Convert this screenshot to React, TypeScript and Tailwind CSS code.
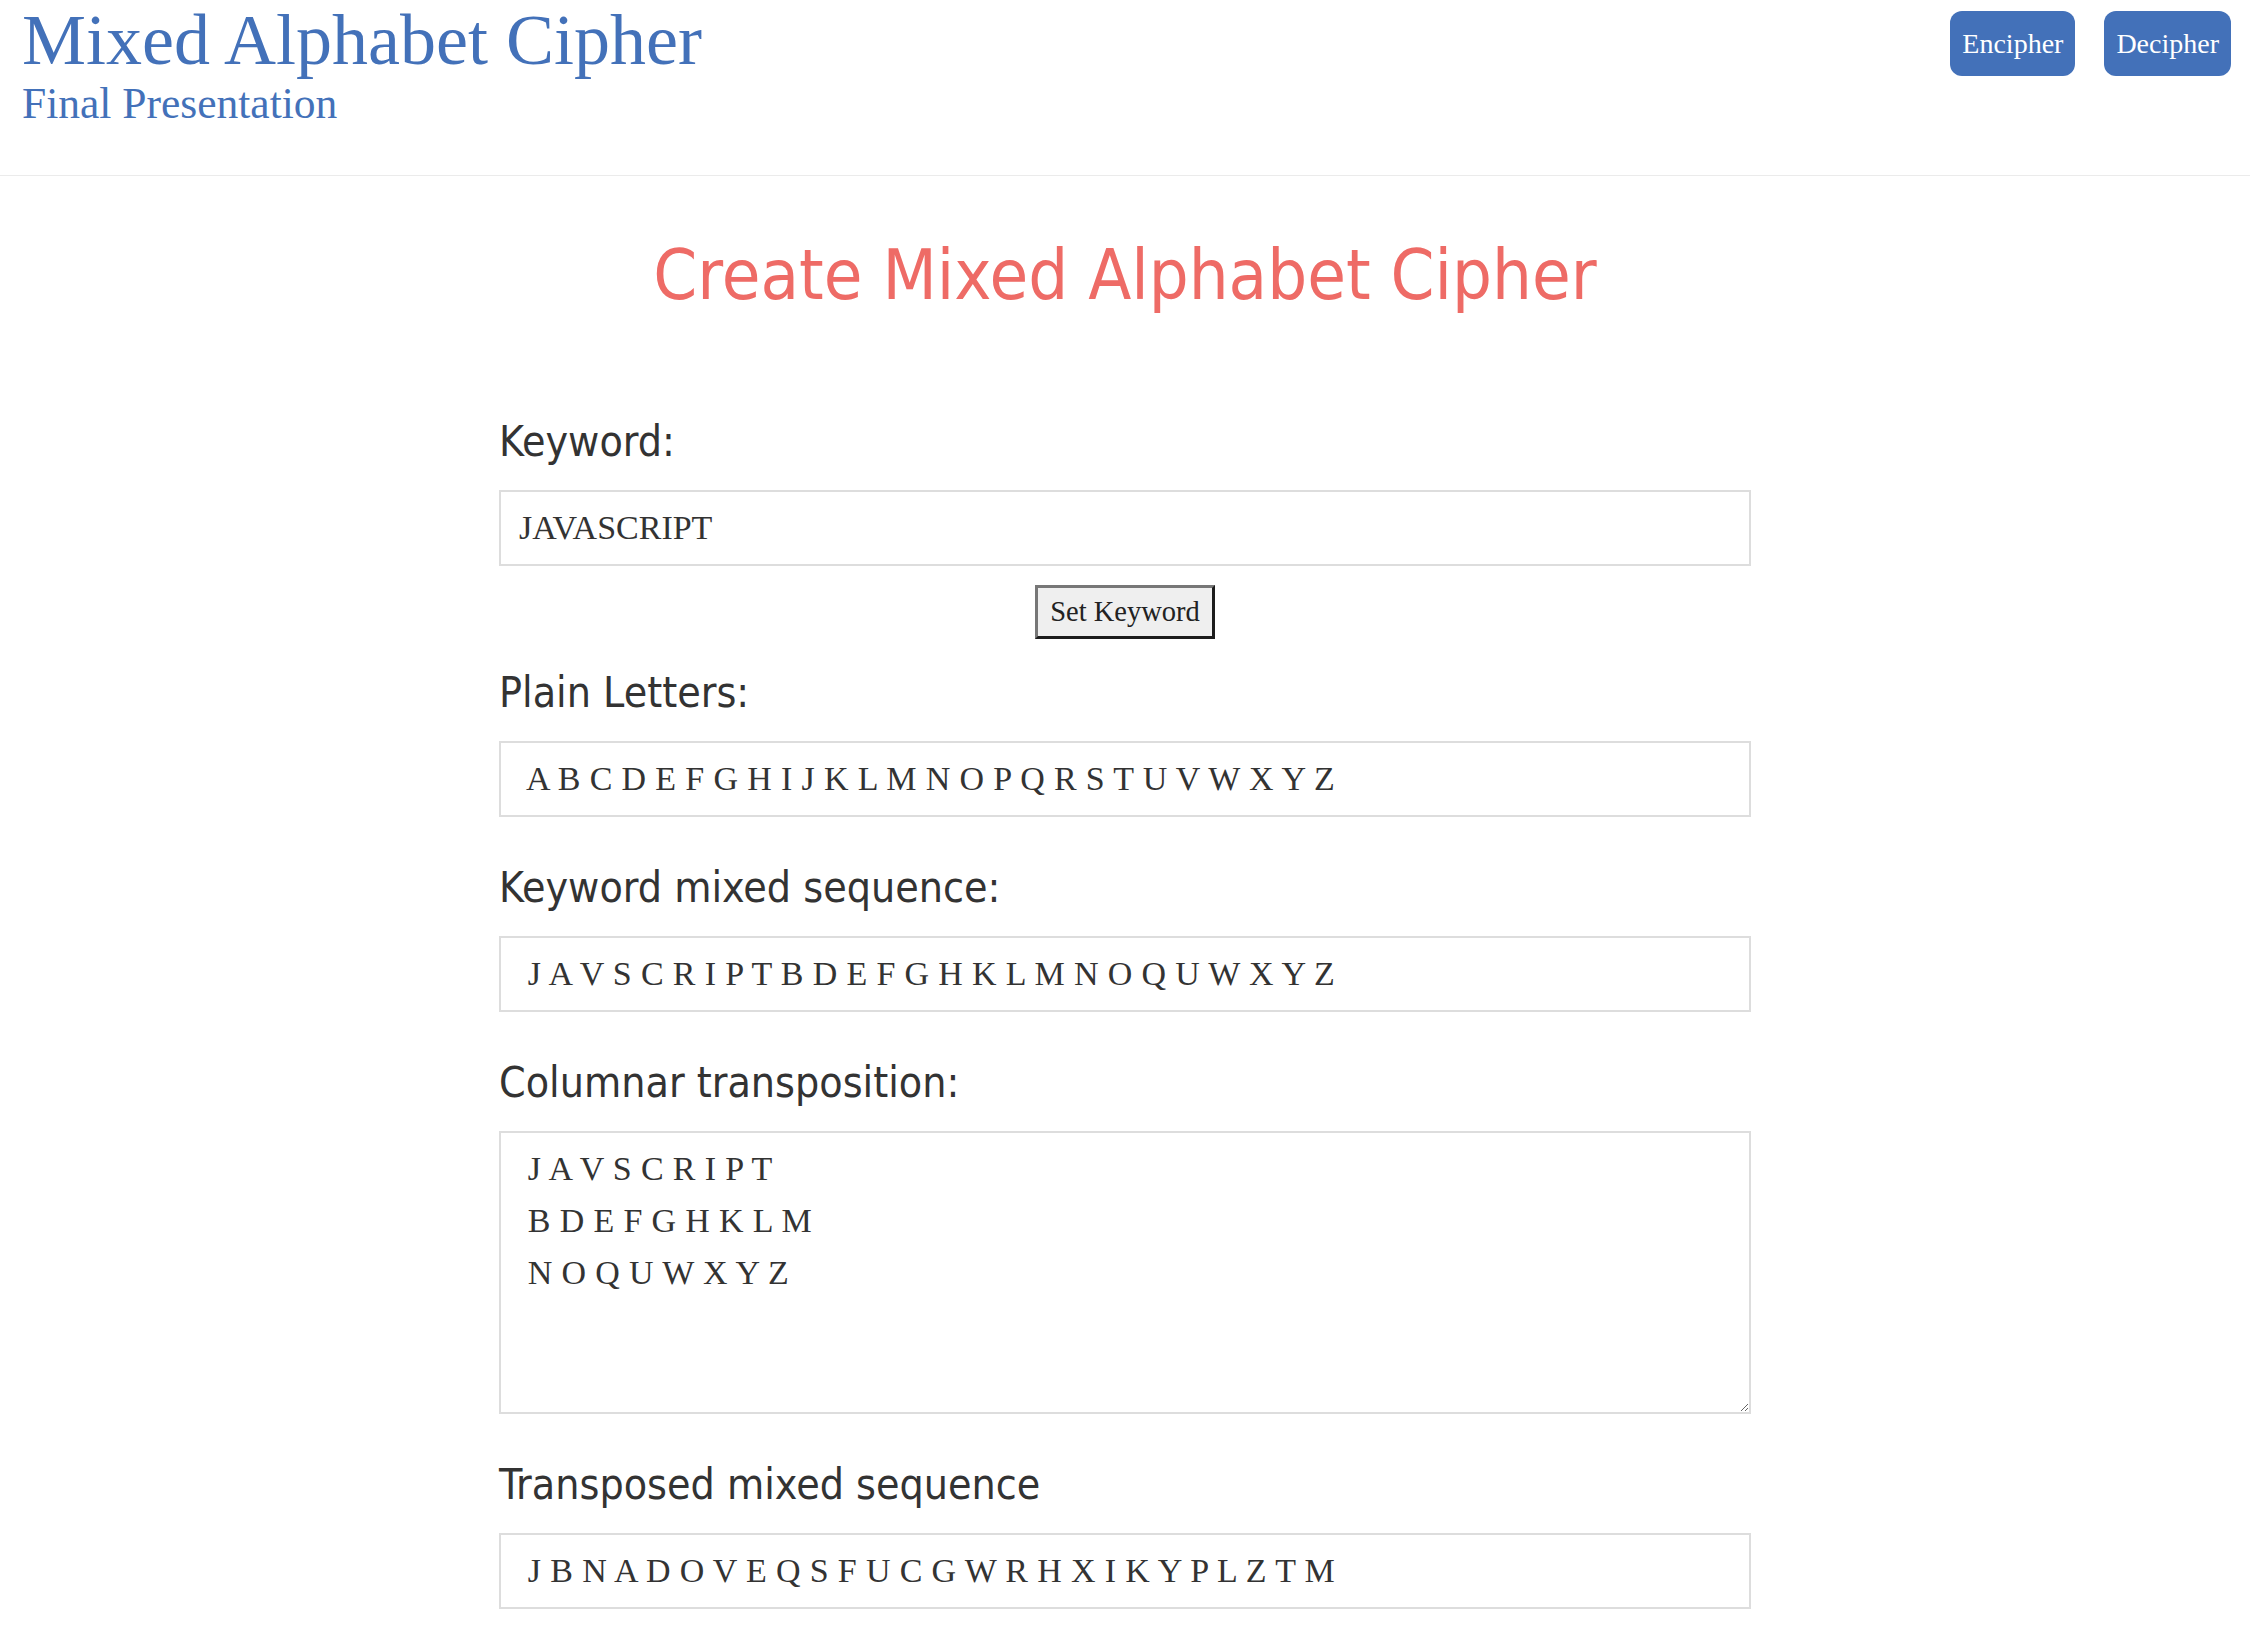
const plain = " A B C D E F G H I J K L M N O P Q R S T U V W X Y Z"
const mixed = " J A V S C R I P T B D E F G H K L M N O Q U W X Y Z"
const columns = " J A V S C R I P T\n B D E F G H K L M\n N O Q U W X Y Z"
const transposed = " J B N A D O V E Q S F U C G W R H X I K Y P L Z T M"

function Label({ children }: { children: React.ReactNode }) {
  return (
    <label className="block font-['DejaVu_Sans_Condensed','DejaVu_Sans',sans-serif] font-stretch-condensed text-[42.5px] leading-[50px] text-[#333333] mb-[23px]">
      {children}
    </label>
  )
}

function LetterBox({ value }: { value: string }) {
  return (
    <input
      readOnly
      value={value}
      className="block w-full h-[76px] border-2 border-[#dddddd] bg-white pl-[18px] text-[34px] tracking-[0.35px] text-[#333333] outline-none"
    />
  )
}

export default function App() {
  return (
    <div className="min-h-screen bg-white font-['Liberation_Serif',serif]">
      <header className="flex justify-between h-[176px] border-b border-[#ebebeb] pl-[22px] pr-[19px]">
        <div className="text-[#4371b9]">
          <h1 className="mt-[4px] text-[72px] leading-[72px]">Mixed Alphabet Cipher</h1>
          <h2 className="mt-[6px] text-[43.5px] leading-[43px]">Final Presentation</h2>
        </div>
        <nav className="flex items-start gap-[29px] pt-[11px]">
          <button className="h-[65px] px-[12px] rounded-[12px] bg-[#4371b9] text-white text-[28px]">Encipher</button>
          <button className="h-[65px] px-[12px] rounded-[12px] bg-[#4371b9] text-white text-[28px]">Decipher</button>
        </nav>
      </header>

      <main>
        <h1 className="mt-[56px] text-center font-['DejaVu_Sans_Condensed','DejaVu_Sans',sans-serif] font-stretch-condensed text-[70px] leading-[86px] text-[#ee6b66]">
          Create Mixed Alphabet Cipher
        </h1>

        <form className="w-[1252px] mx-auto mt-[99px] pb-[20px]" onSubmit={(e) => e.preventDefault()}>
          <Label>Keyword:</Label>
          <input
            readOnly
            value="JAVASCRIPT"
            className="block w-full h-[76px] border-2 border-[#dddddd] bg-white pl-[18px] text-[34px] text-[#333333] outline-none"
          />
          <div className="flex justify-center mt-[19px]">
            <button
              type="button"
              className="w-[180px] h-[54px] bg-[#efefef] border-[3px] border-t-[#777777] border-l-[#777777] border-b-[#1c1c1c] border-r-[#1c1c1c] text-[28.5px] text-[#222222]"
            >
              Set Keyword
            </button>
          </div>

          <div className="mt-[29px]">
            <Label>Plain Letters:</Label>
            <LetterBox value={plain} />
          </div>

          <div className="mt-[46px]">
            <Label>Keyword mixed sequence:</Label>
            <LetterBox value={mixed} />
          </div>

          <div className="mt-[46px]">
            <Label>Columnar transposition:</Label>
            <textarea
              readOnly
              value={columns}
              className="block w-full h-[283px] border-2 border-[#dddddd] bg-white pl-[18px] pt-[10px] text-[34px] leading-[52px] tracking-[0.35px] text-[#333333] outline-none"
            />
          </div>

          <div className="mt-[46px]">
            <Label>Transposed mixed sequence</Label>
            <LetterBox value={transposed} />
          </div>
        </form>
      </main>
    </div>
  )
}
